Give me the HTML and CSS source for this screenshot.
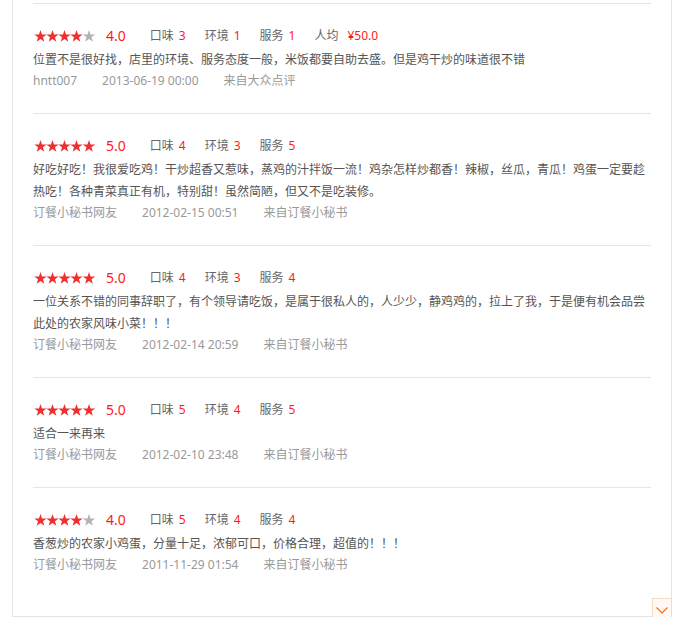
FILE: index.html
```html
<!DOCTYPE html>
<html lang="zh-CN">
<head>
<meta charset="utf-8">
<title>评论</title>
<link rel="stylesheet" href="styles.css">
</head>
<body>
<svg class="defs" width="0" height="0" aria-hidden="true">
  <defs>
    <polygon id="star" points="6.5,0 8.03,4.4 12.68,4.5 8.97,7.31 10.32,11.76 6.5,9.1 2.68,11.76 4.03,7.31 0.32,4.5 4.97,4.4"/>
  </defs>
</svg>
<div class="panel">
  <div class="review">
    <div class="rating">
      <svg class="stars" width="62" height="12" viewBox="0 0 62 12">
        <use href="#star" x="0" class="on"/><use href="#star" x="12" class="on"/><use href="#star" x="24" class="on"/><use href="#star" x="36" class="on"/><use href="#star" x="48.5" class="off"/>
      </svg>
      <span class="score">4.0</span>
      <span class="item">口味<em>3</em></span>
      <span class="item">环境<em>1</em></span>
      <span class="item">服务<em>1</em></span>
      <span class="item">人均<em class="price">¥50.0</em></span>
    </div>
    <p class="text">位置不是很好找，店里的环境、服务态度一般，米饭都要自助去盛。但是鸡干炒的味道很不错</p>
    <div class="meta"><span>hntt007</span><span>2013-06-19 00:00</span><span>来自大众点评</span></div>
  </div>

  <div class="review">
    <div class="rating">
      <svg class="stars" width="62" height="12" viewBox="0 0 62 12">
        <use href="#star" x="0" class="on"/><use href="#star" x="12" class="on"/><use href="#star" x="24" class="on"/><use href="#star" x="36" class="on"/><use href="#star" x="48.5" class="on"/>
      </svg>
      <span class="score">5.0</span>
      <span class="item">口味<em>4</em></span>
      <span class="item">环境<em>3</em></span>
      <span class="item">服务<em>5</em></span>
    </div>
    <p class="text">好吃好吃！我很爱吃鸡！干炒超香又惹味，蒸鸡的汁拌饭一流！鸡杂怎样炒都香！辣椒，丝瓜，青瓜！鸡蛋一定要趁热吃！各种青菜真正有机，特别甜！虽然简陋，但又不是吃装修。</p>
    <div class="meta"><span>订餐小秘书网友</span><span>2012-02-15 00:51</span><span>来自订餐小秘书</span></div>
  </div>

  <div class="review">
    <div class="rating">
      <svg class="stars" width="62" height="12" viewBox="0 0 62 12">
        <use href="#star" x="0" class="on"/><use href="#star" x="12" class="on"/><use href="#star" x="24" class="on"/><use href="#star" x="36" class="on"/><use href="#star" x="48.5" class="on"/>
      </svg>
      <span class="score">5.0</span>
      <span class="item">口味<em>4</em></span>
      <span class="item">环境<em>3</em></span>
      <span class="item">服务<em>4</em></span>
    </div>
    <p class="text">一位关系不错的同事辞职了，有个领导请吃饭，是属于很私人的，人少少，静鸡鸡的，拉上了我，于是便有机会品尝此处的农家风味小菜！！！</p>
    <div class="meta"><span>订餐小秘书网友</span><span>2012-02-14 20:59</span><span>来自订餐小秘书</span></div>
  </div>

  <div class="review">
    <div class="rating">
      <svg class="stars" width="62" height="12" viewBox="0 0 62 12">
        <use href="#star" x="0" class="on"/><use href="#star" x="12" class="on"/><use href="#star" x="24" class="on"/><use href="#star" x="36" class="on"/><use href="#star" x="48.5" class="on"/>
      </svg>
      <span class="score">5.0</span>
      <span class="item">口味<em>5</em></span>
      <span class="item">环境<em>4</em></span>
      <span class="item">服务<em>5</em></span>
    </div>
    <p class="text">适合一来再来</p>
    <div class="meta"><span>订餐小秘书网友</span><span>2012-02-10 23:48</span><span>来自订餐小秘书</span></div>
  </div>

  <div class="review">
    <div class="rating">
      <svg class="stars" width="62" height="12" viewBox="0 0 62 12">
        <use href="#star" x="0" class="on"/><use href="#star" x="12" class="on"/><use href="#star" x="24" class="on"/><use href="#star" x="36" class="on"/><use href="#star" x="48.5" class="off"/>
      </svg>
      <span class="score">4.0</span>
      <span class="item">口味<em>5</em></span>
      <span class="item">环境<em>4</em></span>
      <span class="item">服务<em>4</em></span>
    </div>
    <p class="text">香葱炒的农家小鸡蛋，分量十足，浓郁可口，价格合理，超值的！！！</p>
    <div class="meta"><span>订餐小秘书网友</span><span>2011-11-29 01:54</span><span>来自订餐小秘书</span></div>
  </div>

  <a class="more" href="#" aria-label="更多">
    <svg width="18" height="18" viewBox="0 0 18 18"><polyline points="3.5,8.5 9,14 14.5,8.5" fill="none" stroke="#ff6600" stroke-width="1.1"/></svg>
  </a>
</div>
</body>
</html>
```

FILE: styles.css
```css
html, body {
  margin: 0;
  padding: 0;
  background: #fff;
}

body {
  font-family: "Noto Sans", "Noto Sans CJK SC", sans-serif;
  font-size: 12px;
  color: #666;
}

.defs {
  position: absolute;
  width: 0;
  height: 0;
}

.panel {
  position: relative;
  box-sizing: border-box;
  width: 660px;
  margin-left: 12px;
  padding: 3px 20px 19px;
  border: 1px solid #e4e4e4;
  border-top: none;
}

.review {
  border-top: 1px solid #e6e6e6;
  padding: 20px 0 22px;
}

.rating {
  display: flex;
  align-items: center;
  height: 24px;
  padding-left: 1px;
}

.stars {
  display: block;
  margin-right: 10px;
}

.stars .on {
  fill: #f03030;
}

.stars .off {
  fill: #b3b3b3;
}

.score {
  font-size: 14px;
  color: #ff1a1a;
  margin-right: 24px;
  line-height: 24px;
}

.item {
  color: #666;
  margin-right: 19px;
  line-height: 24px;
}

.item em {
  font-style: normal;
  color: #ff1a1a;
  margin-left: 5px;
}

.item em.price {
  margin-left: 9px;
}

.text {
  margin: 1px 0 0;
  line-height: 22px;
  color: #555;
}

.meta {
  display: flex;
  line-height: 20px;
  color: #999;
}

.meta span {
  margin-right: 25px;
}

.more {
  position: absolute;
  right: -1px;
  bottom: -2px;
  box-sizing: border-box;
  width: 20px;
  height: 20px;
  border: 1px solid #f7d9bf;
  background: #fffaf6;
  display: flex;
  align-items: center;
  justify-content: center;
}

.more svg {
  display: block;
}
```
